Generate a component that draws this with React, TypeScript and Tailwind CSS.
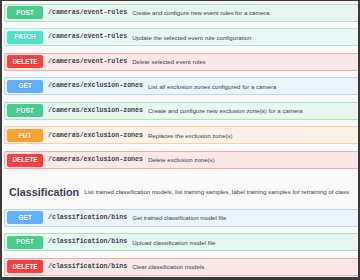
import React from 'react';

type Op = { method: string; path: string; desc: string };

const styles: Record<string, { block: string; badge: string }> = {
  POST: { block: 'bg-[#e8f6f0] border-[#a8e2c6]', badge: 'bg-[#49cc90]' },
  PATCH: { block: 'bg-[#e9f8f5] border-[#a9ecdc]', badge: 'bg-[#50e3c2]' },
  DELETE: { block: 'bg-[#fae7e7] border-[#f5aaaa]', badge: 'bg-[#f93e3e]' },
  GET: { block: 'bg-[#ebf3fb] border-[#b5d6f8]', badge: 'bg-[#61affe]' },
  PUT: { block: 'bg-[#fbf1e6] border-[#f8d0a1]', badge: 'bg-[#fca130]' },
};

const cameraOps: Op[] = [
  { method: 'POST', path: '/cameras/event-rules', desc: 'Create and configure new event rules for a camera' },
  { method: 'PATCH', path: '/cameras/event-rules', desc: 'Update the selected event rule configuration' },
  { method: 'DELETE', path: '/cameras/event-rules', desc: 'Delete selected event rules' },
  { method: 'GET', path: '/cameras/exclusion-zones', desc: 'List all exclusion zones configured for a camera' },
  { method: 'POST', path: '/cameras/exclusion-zones', desc: 'Create and configure new exclusion zone(s) for a camera' },
  { method: 'PUT', path: '/cameras/exclusion-zones', desc: 'Replaces the exclusion zone(s)' },
  { method: 'DELETE', path: '/cameras/exclusion-zones', desc: 'Delete exclusion zone(s)' },
];

const classOps: Op[] = [
  { method: 'GET', path: '/classification/bins', desc: 'Get trained classification model file' },
  { method: 'POST', path: '/classification/bins', desc: 'Upload classification model file' },
  { method: 'DELETE', path: '/classification/bins', desc: 'Clear classification models' },
];

function OpBlock({ op }: { op: Op }) {
  const s = styles[op.method];
  return (
    <div className={`flex items-center h-[18px] mb-[6.6px] pl-[2px] border rounded-l-[2px] border-r-0 whitespace-nowrap ${s.block}`}>
      <span
        className={`flex items-center justify-center w-[36px] h-[13px] rounded-[2px] text-white text-[6.4px] font-bold shrink-0 ${s.badge}`}
        style={{ textShadow: '0 1px 0 rgba(0,0,0,.1)' }}
      >
        {op.method}
      </span>
      <span className="ml-[5px] text-[6.6px] font-bold text-[#3b4151] font-['Liberation_Mono',monospace]">{op.path}</span>
      <span className="ml-[5px] text-[6.1px] text-[#3b4151]">{op.desc}</span>
    </div>
  );
}

export default function App() {
  return (
    <div className="w-[360px] h-[280px] bg-[#3a3a3a] pt-[1px] pl-[2px] pr-[2px] pb-[3px] font-['Liberation_Sans',Arial,sans-serif]">
      <div className="h-full bg-[#fafafa] overflow-hidden pt-[2.5px] pl-[2px]">
        {cameraOps.map((op, i) => (
          <OpBlock key={i} op={op} />
        ))}
        <div className="flex items-center h-[32px] pl-[5px] whitespace-nowrap mb-[1px] overflow-hidden">
          <span className="text-[10.8px] font-bold text-[#3b4151] shrink-0">Classification</span>
          <span className="ml-[5px] text-[6.1px] text-[#3b4151]">
            List trained classification models, list training samples, label training samples for retraining of class
          </span>
        </div>
        {classOps.map((op, i) => (
          <OpBlock key={i} op={op} />
        ))}
      </div>
    </div>
  );
}
